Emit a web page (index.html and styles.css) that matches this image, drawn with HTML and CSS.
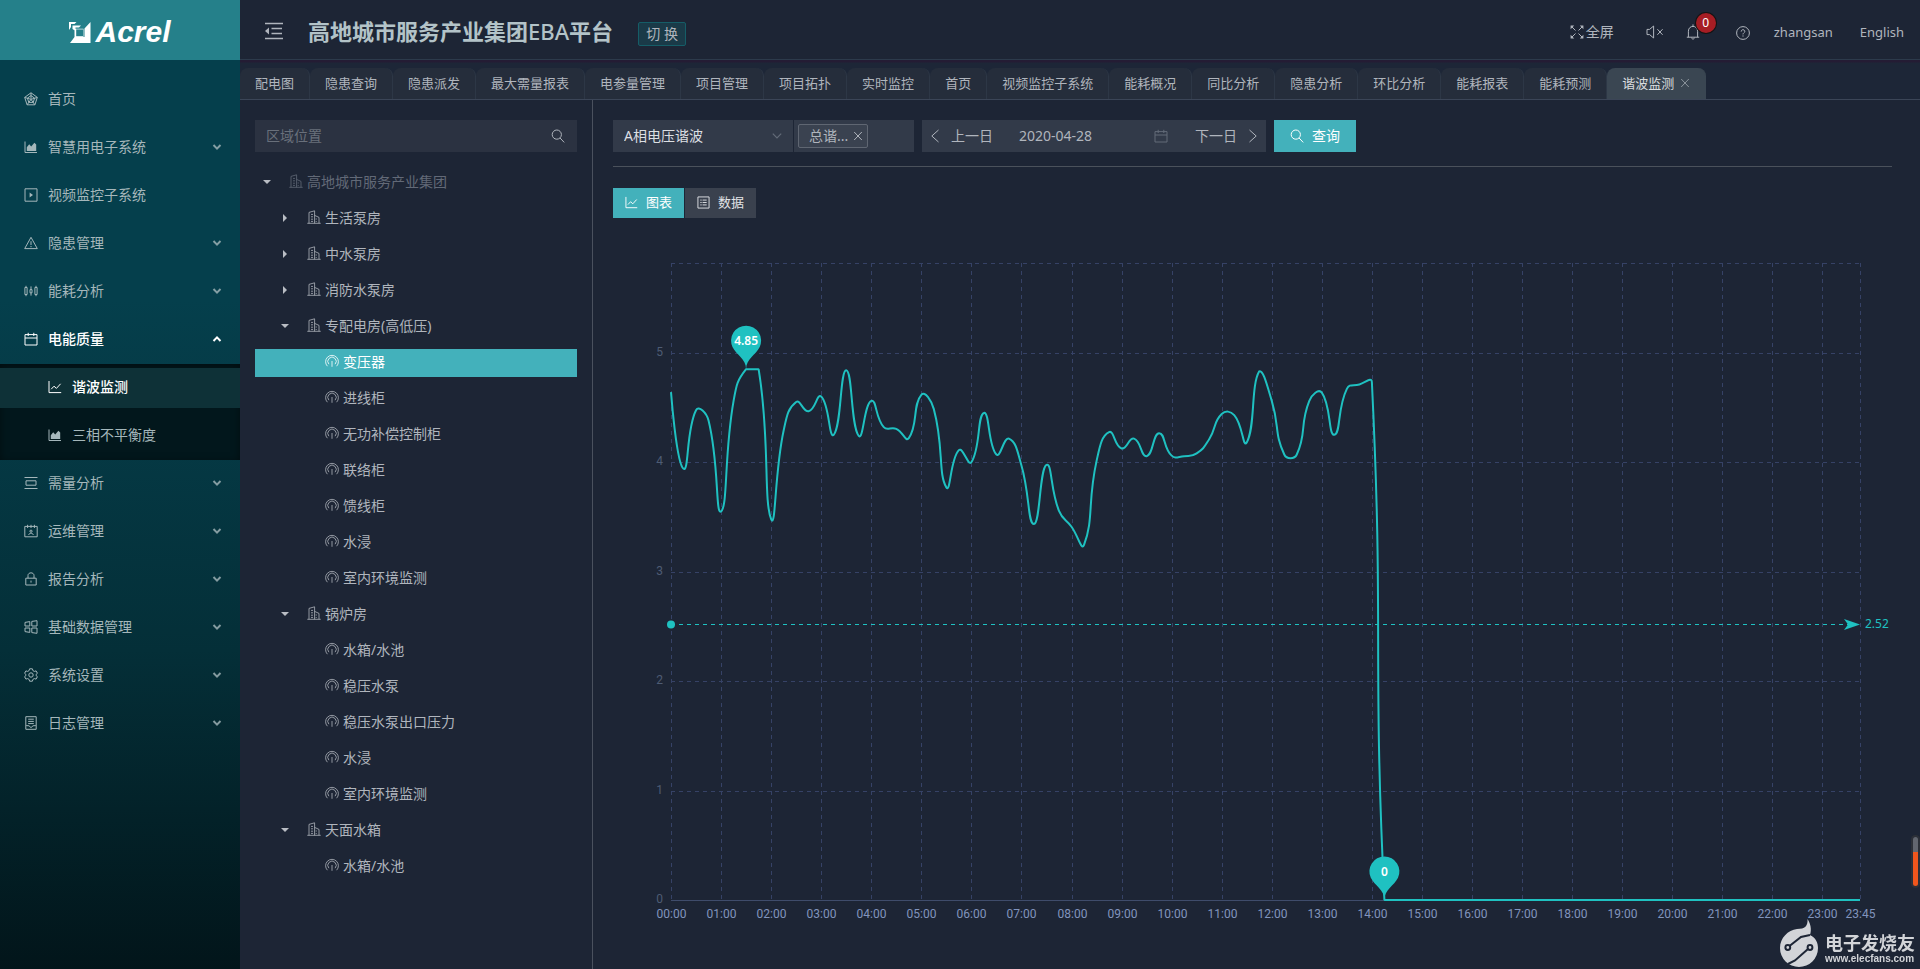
FILE: index.html
```html
<!DOCTYPE html>
<html lang="zh-CN">
<head>
<meta charset="utf-8">
<title>谐波监测 - 高地城市服务产业集团EBA平台</title>
<link rel="stylesheet" href="styles.css">
</head>
<body>
<svg class="sprite" aria-hidden="true">
  <symbol id="radar" viewBox="0 0 14 14"><path d="M7 .8 13.3 5.4 10.9 12.8H3.1L.7 5.4ZM7 3.6 10.6 6.2 9.2 10.4H4.8L3.4 6.2ZM7 .8V7M13.3 5.4 7 7.4M10.9 12.8 7 7.4M3.1 12.8 7 7.4M.7 5.4 7 7.4"/></symbol>
  <symbol id="area" viewBox="0 0 14 14"><path d="M1 1.5V12.5H13"/><path class="fill" d="M2.8 11V7.2L5.2 4.2 7.2 6.4 10.4 2.8 12.2 4.4V11Z"/></symbol>
  <symbol id="play" viewBox="0 0 14 14"><path d="M1 .8H13V13.2H1Z"/><path class="fill" d="M5.6 4.4V9.6L9 7Z"/></symbol>
  <symbol id="warn" viewBox="0 0 14 14"><path d="M7 1.3 13.3 12.6H.7ZM7 5.2V9M7 10V11.2"/></symbol>
  <symbol id="stock" viewBox="0 0 14 14"><path d="M.9 3.5H3.1V10.5H.9ZM2 1.8V3.5M2 10.5V12.2M6 5.6H8V8.8H6ZM7 2.4V5.6M7 8.8V11.6M10.9 3.5H13.1V10.5H10.9ZM12 1.8V3.5M12 10.5V12.2"/></symbol>
  <symbol id="calendar" viewBox="0 0 14 14"><path d="M1 2.6H13V13H1ZM1 6H13M4.2 .8V4M9.8 .8V4"/></symbol>
  <symbol id="linechart" viewBox="0 0 14 14"><path d="M1 1V12.6H13.2M3.2 9.2 6 6.2 8.4 8.4 12.6 3.8"/></symbol>
  <symbol id="middle" viewBox="0 0 14 14"><path d="M.5 1.5H13.5M.5 12.5H13.5M2 4.8H12V9.2H2Z"/></symbol>
  <symbol id="schedule" viewBox="0 0 14 14"><path d="M.8 2.4H13.2V12.8H.8ZM3.6 .8V4M7 .8V4M10.4 .8V4M4.8 11C4.8 8.6 9.2 8.6 9.2 11M5.9 7.2A1.1 1.1 0 1 1 8.1 7.2 1.1 1.1 0 1 1 5.9 7.2"/></symbol>
  <symbol id="lock" viewBox="0 0 14 14"><path d="M1.8 6.2H12.2V13H1.8ZM4 6.2V3.4C4 0 10 0 10 3.4V6.2M7 8.6V10.6"/></symbol>
  <symbol id="windows" viewBox="0 0 14 14"><path d="M1 2.4 5.8 1.6V6H1ZM7.8 1.4 13 .7V6H7.8ZM1 8H5.8V12.4L1 11.6ZM7.8 8H13V13.3L7.8 12.6Z"/></symbol>
  <symbol id="gear" viewBox="0 0 14 14"><path d="M5.6 .8H8.4L8.9 2.6 10.3 3.4 12.1 2.9 13.4 5.3 12.1 6.4V7.6L13.4 8.7 12.1 11.1 10.3 10.6 8.9 11.4 8.4 13.2H5.6L5.1 11.4 3.7 10.6 1.9 11.1.6 8.7 1.9 7.6V6.4L.6 5.3 1.9 2.9 3.7 3.4 5.1 2.6Z"/><circle cx="7" cy="7" r="2.2"/></symbol>
  <symbol id="log" viewBox="0 0 14 14"><path d="M1.8 .7H12.2V13.3H1.8ZM4.2 3.2H9.8M4.2 5.4H9.8M4.2 7.6H9.8M2.2 9.6 5 9.8 7 11.6 9 9.8 11.8 9.6"/></symbol>
  <symbol id="down" viewBox="0 0 10 10"><path d="M1.5 3 5 6.6 8.5 3"/></symbol>
  <symbol id="up" viewBox="0 0 10 10"><path d="M1.5 7 5 3.4 8.5 7"/></symbol>
  <symbol id="building" viewBox="0 0 14 14"><path d="M.3 13.3H13.7M2 13.3V2.4L7.6 .8V13.3M7.6 5.4 12 7.4V13.3M4 4.4H6M4 6.8H6M4 9.2H6M9.2 8.4V9.6M9.2 11V12M4 11.4H6"/></symbol>
  <symbol id="meter" viewBox="0 0 14 14"><path d="M2.4 12.2A6.4 6.4 0 1 1 11.6 12.2M3.9 10.2A4.2 4.2 0 1 1 10.1 10.2M7 7V12.8"/></symbol>
  <symbol id="search" viewBox="0 0 14 14"><circle cx="5.8" cy="5.6" r="4.6"/><path d="M9.1 9 13.2 13.4"/></symbol>
  <symbol id="cross" viewBox="0 0 10 10"><path d="M1.2 1 8.8 9M8.8 1 1.2 9"/></symbol>
  <symbol id="list" viewBox="0 0 14 14"><path d="M1 1H13V13H1ZM3.6 4.4H5M6 4.4H10.4M3.6 7H5M6 7H10.4M3.6 9.6H5M6 9.6H10.4"/></symbol>
  <symbol id="left" viewBox="0 0 10 14"><path d="M8.5 1 1.8 7 8.5 13"/></symbol>
  <symbol id="right" viewBox="0 0 10 14"><path d="M1.5 1 8.2 7 1.5 13"/></symbol>
  <symbol id="fold" viewBox="0 0 18 18"><path stroke-width="1.6" d="M0 1.5H18M6.5 6.5H17M6.5 11.5H17M0 16.5H18"/><path class="fill" d="M4 5.6V12.4L0 9Z"/></symbol>
  <symbol id="shrink" viewBox="0 0 14 14"><path d="M1.5 1.5 5.5 5.5M12.5 1.5 8.5 5.5M1.5 12.5 5.5 8.5M12.5 12.5 8.5 8.5"/><path class="fill" d="M.6 .6H4.2L.6 4.2ZM13.4 .6V4.2L9.8 .6ZM.6 13.4V9.8L4.2 13.4ZM13.4 13.4H9.8L13.4 9.8Z"/></symbol>
  <symbol id="mute" viewBox="0 0 18 14"><path d="M1 4.4H3.6L7.6 1V13L3.6 9.6H1ZM11.4 4.2 16.6 9.8M16.6 4.2 11.4 9.8"/></symbol>
  <symbol id="bell" viewBox="0 0 14 16"><path d="M.8 13.2H13.2M2.4 13.2V7.2C2.4 .8 11.6 .8 11.6 7.2V13.2M7 .4V2.2M5.6 13.6C5.8 15.6 8.2 15.6 8.4 13.6"/></symbol>
  <symbol id="help" viewBox="0 0 14 14"><circle cx="7" cy="7" r="6.4"/><path d="M5.2 5.6C5.2 3 8.8 3.2 8.8 5.4 8.8 6.8 7 6.8 7 8.4M7 9.4V10.6"/></symbol>
</svg>

<div class="app">
  <aside class="sidebar">
    <a class="logo" href="#">
      <svg class="logo-mark" viewBox="0 0 22 21" aria-hidden="true"><path class="white" d="M0 0H7.5L5.5 2H2V5L0 8ZM3.5 3.5H12L10 5.5H6.5V9L3.5 7ZM21.5 0V21H1L5.5 15V6.8H14.5V15H7.5 15.5V6.5Z"/><path class="hole" d="M7.2 7.4H14.2V14.2H7.2Z"/></svg>
      <span>Acrel</span>
    </a>
    <nav class="menu">
      <a class="item" href="#"><svg class="ico"><use href="#radar"/></svg><span>首页</span></a>
      <a class="item" href="#"><svg class="ico"><use href="#area"/></svg><span>智慧用电子系统</span><svg class="caret"><use href="#down"/></svg></a>
      <a class="item" href="#"><svg class="ico"><use href="#play"/></svg><span>视频监控子系统</span></a>
      <a class="item" href="#"><svg class="ico"><use href="#warn"/></svg><span>隐患管理</span><svg class="caret"><use href="#down"/></svg></a>
      <a class="item" href="#"><svg class="ico"><use href="#stock"/></svg><span>能耗分析</span><svg class="caret"><use href="#down"/></svg></a>
      <a class="item open" href="#"><svg class="ico"><use href="#calendar"/></svg><span>电能质量</span><svg class="caret"><use href="#up"/></svg></a>
      <div class="submenu">
        <a class="item current" href="#"><svg class="ico"><use href="#linechart"/></svg><span>谐波监测</span></a>
        <a class="item" href="#"><svg class="ico"><use href="#area"/></svg><span>三相不平衡度</span></a>
      </div>
      <a class="item" href="#"><svg class="ico"><use href="#middle"/></svg><span>需量分析</span><svg class="caret"><use href="#down"/></svg></a>
      <a class="item" href="#"><svg class="ico"><use href="#schedule"/></svg><span>运维管理</span><svg class="caret"><use href="#down"/></svg></a>
      <a class="item" href="#"><svg class="ico"><use href="#lock"/></svg><span>报告分析</span><svg class="caret"><use href="#down"/></svg></a>
      <a class="item" href="#"><svg class="ico"><use href="#windows"/></svg><span>基础数据管理</span><svg class="caret"><use href="#down"/></svg></a>
      <a class="item" href="#"><svg class="ico"><use href="#gear"/></svg><span>系统设置</span><svg class="caret"><use href="#down"/></svg></a>
      <a class="item" href="#"><svg class="ico"><use href="#log"/></svg><span>日志管理</span><svg class="caret"><use href="#down"/></svg></a>
    </nav>
  </aside>

  <div class="main">
    <header class="header">
      <button class="plain fold" aria-label="收起菜单"><svg><use href="#fold"/></svg></button>
      <h1>高地城市服务产业集团<span>EBA</span>平台</h1>
      <button class="switch">切 换</button>
      <div class="tools">
        <button class="plain full"><svg class="ico"><use href="#shrink"/></svg>全屏</button>
        <button class="plain mute" aria-label="静音"><svg><use href="#mute"/></svg></button>
        <button class="plain bell" aria-label="通知"><svg><use href="#bell"/></svg><span class="badge">0</span></button>
        <button class="plain help" aria-label="帮助"><svg class="ico"><use href="#help"/></svg></button>
        <a class="user" href="#">zhangsan</a>
        <a class="lang" href="#">English</a>
      </div>
    </header>

    <nav class="tabs">
      <a href="#">配电图</a><a href="#">隐患查询</a><a href="#">隐患派发</a><a href="#">最大需量报表</a><a href="#">电参量管理</a><a href="#">项目管理</a><a href="#">项目拓扑</a><a href="#">实时监控</a><a href="#">首页</a><a href="#">视频监控子系统</a><a href="#">能耗概况</a><a href="#">同比分析</a><a href="#">隐患分析</a><a href="#">环比分析</a><a href="#">能耗报表</a><a href="#">能耗预测</a><a class="active" href="#">谐波监测<svg class="x"><use href="#cross"/></svg></a>
    </nav>

    <div class="body">
      <section class="tree-panel">
        <div class="search">
          <input type="text" placeholder="区域位置" aria-label="区域位置">
          <button class="plain" aria-label="搜索"><svg class="ico"><use href="#search"/></svg></button>
        </div>
        <ul class="tree">
          <li class="l0 dim"><i class="arrow down"></i><svg class="ico"><use href="#building"/></svg><a href="#">高地城市服务产业集团</a></li>
          <li class="l1"><i class="arrow"></i><svg class="ico"><use href="#building"/></svg><a href="#">生活泵房</a></li>
          <li class="l1"><i class="arrow"></i><svg class="ico"><use href="#building"/></svg><a href="#">中水泵房</a></li>
          <li class="l1"><i class="arrow"></i><svg class="ico"><use href="#building"/></svg><a href="#">消防水泵房</a></li>
          <li class="l1"><i class="arrow down"></i><svg class="ico"><use href="#building"/></svg><a href="#">专配电房(高低压)</a></li>
          <li class="l2 selected"><svg class="ico"><use href="#meter"/></svg><a href="#">变压器</a></li>
          <li class="l2"><svg class="ico"><use href="#meter"/></svg><a href="#">进线柜</a></li>
          <li class="l2"><svg class="ico"><use href="#meter"/></svg><a href="#">无功补偿控制柜</a></li>
          <li class="l2"><svg class="ico"><use href="#meter"/></svg><a href="#">联络柜</a></li>
          <li class="l2"><svg class="ico"><use href="#meter"/></svg><a href="#">馈线柜</a></li>
          <li class="l2"><svg class="ico"><use href="#meter"/></svg><a href="#">水浸</a></li>
          <li class="l2"><svg class="ico"><use href="#meter"/></svg><a href="#">室内环境监测</a></li>
          <li class="l1"><i class="arrow down"></i><svg class="ico"><use href="#building"/></svg><a href="#">锅炉房</a></li>
          <li class="l2"><svg class="ico"><use href="#meter"/></svg><a href="#">水箱/水池</a></li>
          <li class="l2"><svg class="ico"><use href="#meter"/></svg><a href="#">稳压水泵</a></li>
          <li class="l2"><svg class="ico"><use href="#meter"/></svg><a href="#">稳压水泵出口压力</a></li>
          <li class="l2"><svg class="ico"><use href="#meter"/></svg><a href="#">水浸</a></li>
          <li class="l2"><svg class="ico"><use href="#meter"/></svg><a href="#">室内环境监测</a></li>
          <li class="l1"><i class="arrow down"></i><svg class="ico"><use href="#building"/></svg><a href="#">天面水箱</a></li>
          <li class="l2"><svg class="ico"><use href="#meter"/></svg><a href="#">水箱/水池</a></li>
        </ul>
      </section>

      <section class="content">
        <div class="toolbar">
          <div class="select">
            <select aria-label="参数"><option>A相电压谐波</option></select>
            <svg><use href="#down"/></svg>
          </div>
          <div class="multi"><span class="tag">总谐...<button class="plain" aria-label="移除"><svg class="x"><use href="#cross"/></svg></button></span></div>
          <div class="date">
            <button class="plain"><svg><use href="#left"/></svg>上一日</button>
            <input type="text" value="2020-04-28" aria-label="日期">
            <svg class="ico cal"><use href="#calendar"/></svg>
            <button class="plain">下一日<svg><use href="#right"/></svg></button>
          </div>
          <button class="query"><svg class="ico"><use href="#search"/></svg>查询</button>
        </div>
        <div class="views">
          <button class="on"><svg><use href="#linechart"/></svg>图表</button>
          <button><svg><use href="#list"/></svg>数据</button>
        </div>
        <svg class="chart" id="chart" role="img" aria-label="A相电压总谐波曲线"></svg>
      </section>
    </div>
  </div>
</div>

<div class="meter-bar"></div>
<div class="watermark">
  <svg viewBox="0 0 40 50" aria-hidden="true">
    <path class="shape" d="M28.5 1C33 8 32 14 31 17 37 20 39 25 39 30A19 19 0 0 1 20 49 19 19 0 0 1 1 30C1 20 9 12 18 11 26 11 29 8 28.5 1Z"/>
    <path class="trace" d="M10.5 28 22 19 31 17M29 31 16 42.5 9 46"/><circle class="node" cx="8.8" cy="29.5" r="2.4"/><circle class="node" cx="31" cy="29.5" r="2.4"/>
  </svg>
  <p><b>电子发烧友</b><small>www.elecfans.com</small></p>
</div>
<script src="chart.js"></script>
</body>
</html>
```
FILE: styles.css
```css
* { box-sizing: border-box; }

body {
  margin: 0;
  background: #1d2535;
  color: #b0b5bd;
  font: 14px/20px "Noto Sans", "Noto Sans CJK SC", sans-serif;
}

a { color: inherit; text-decoration: none; }
button, input, select { font: inherit; color: inherit; border: 0; margin: 0; }
button { cursor: pointer; }
h1, ul, p { margin: 0; padding: 0; }

svg { fill: none; stroke: currentColor; flex: none; }
.fill { fill: currentColor; stroke: none; }
.sprite { position: absolute; width: 0; height: 0; }
.ico { width: 14px; height: 14px; }
.x { width: 10px; height: 10px; }
.plain { display: flex; align-items: center; padding: 0; background: none; }

.app { display: flex; min-height: 100vh; }

/* sidebar */
.sidebar {
  flex: none;
  width: 240px;
  background: linear-gradient(#053f4c 0, #053f4c 300px, #042f38 650px, #02151a 100%);
  color: #a5b7bb;
}
.logo {
  display: flex;
  align-items: center;
  justify-content: center;
  gap: 4px;
  height: 60px;
  padding-top: 4px;
  background: #25808a;
  color: #fff;
  font: italic bold 30px/30px "Liberation Sans", sans-serif;
}
.logo-mark { width: 22px; height: 21px; stroke: none; }
.white { fill: #fff; }
.hole { fill: #25808a; }
.menu { padding: 16px 0; }
.item {
  display: flex;
  align-items: center;
  height: 40px;
  margin: 8px 0;
  padding: 0 18px 2px 24px;
}
.item:first-child { margin-top: 4px; }
.item .ico { margin-right: 10px; }
.caret { width: 10px; height: 10px; margin-left: auto; stroke-width: 2; opacity: .8; }
.open { color: #fff; font-weight: 500; margin-bottom: 4px; }
.open .caret { opacity: 1; }
.submenu {
  display: flow-root;
  background: #02171c;
  box-shadow: inset 0 2px 8px rgba(0, 0, 0, .45);
}
.submenu .item { padding-left: 48px; }
.submenu .item + .item { margin: 8px 0 4px; }
.submenu .current { margin: 4px 0 0; background: #0e3137; color: #fff; font-weight: 500; }
.submenu + .item { margin-top: 4px; }

/* header */
.main { display: flex; flex: 1; flex-direction: column; min-width: 0; }
.header {
  display: flex;
  align-items: center;
  height: 60px;
  padding: 4px 16px 0 25px;
  border-bottom: 1px solid #2c3a4b;
}
.fold { margin-bottom: 2px; }
.fold svg { width: 18px; height: 18px; }
h1 {
  margin: 0 25px 2px;
  color: #b3c3c8;
  font-size: 22px;
  line-height: 32px;
  white-space: nowrap;
}
h1 span { font-weight: 500; }
.switch {
  width: 48px;
  height: 24px;
  margin-top: 5px;
  padding: 0;
  border: 1px solid #155d67;
  border-radius: 2px;
  background: #1a3a48;
  line-height: 20px;
  white-space: nowrap;
}
.tools { display: flex; align-items: center; margin-left: auto; }
.full { gap: 2px; margin-right: 32px; }
.mute svg { width: 18px; height: 14px; }
.mute { margin-right: 22px; }
.bell { position: relative; margin-right: 36px; }
.bell svg { width: 14px; height: 16px; }
.badge {
  position: absolute;
  left: 10px;
  top: -11px;
  width: 20px;
  height: 20px;
  border-radius: 10px;
  background: #a61d24;
  color: #fff;
  font-size: 12px;
  line-height: 20px;
  box-shadow: 0 0 0 1px #141414;
}
.help { margin-right: 24px; padding-top: 3px; }
.user, .lang { font-size: 13px; }
.user { margin-right: 27px; }

/* page tabs */
.tabs {
  display: flex;
  padding-top: 8px;
  border-bottom: 1px solid #3b4557;
  background: linear-gradient(#241c34 0, #241c34 2px, #1d2637 3px);
}
.tabs a {
  display: flex;
  align-items: center;
  height: 31px;
  padding: 0 15px 1px;
  border-right: 1px solid #2d3746;
  border-radius: 8px 8px 0 0;
  background: #252d3b;
  font-size: 13px;
  white-space: nowrap;
}
.tabs .active { background: #3a4652; color: #d9dcdf; border-color: #3a4652; }
.tabs .x { margin-left: 6px; color: #8b949c; }

.body { display: flex; flex: 1; }

/* location tree */
.tree-panel {
  flex: none;
  width: 353px;
  padding: 20px 15px;
  border-right: 1px solid #4a515e;
}
.search {
  display: flex;
  height: 32px;
  padding: 0 12px 0 11px;
  background: #2b3241;
}
.search input { flex: 1; min-width: 0; padding: 0; background: none; outline: 0; }
::placeholder { color: #69707b; opacity: 1; }
.tree { padding-top: 13px; list-style: none; }
.tree li {
  display: flex;
  align-items: center;
  height: 28px;
  margin: 4px 0 8px;
  padding-bottom: 2px;
}
.tree .ico { margin: 0 4px 2px 0; stroke-width: .8; }
.tree .l0 { padding-left: 8px; }
.tree .l1 { padding-left: 26px; }
.tree .l2 { padding-left: 70px; }
.tree .dim a, .tree .dim .ico { color: #626977; }
.tree .selected { background: #43b1bb; color: #fff; }
.arrow { display: grid; place-items: center; width: 8px; height: 8px; margin-right: 18px; }
.arrow::before {
  content: "";
  width: 4px;
  height: 8px;
  background: #b9bdc4;
  clip-path: polygon(0 0, 100% 50%, 0 100%);
}
.arrow.down::before { width: 8px; height: 4px; clip-path: polygon(0 0, 100% 0, 50% 100%); }

/* content */
.content {
  display: flex;
  flex: 1;
  flex-direction: column;
  min-width: 0;
  padding: 20px 28px 0 20px;
}
.toolbar {
  display: flex;
  padding-bottom: 14px;
  border-bottom: 1px solid #4a515b;
}
.select { display: flex; align-items: center; width: 180px; height: 32px; background: #323a49; color: #dcdfe3; }
.select select { appearance: none; flex: 1; height: 32px; padding: 0 11px; background: none; outline: 0; }
.select svg { width: 12px; height: 12px; margin-right: 10px; color: #636b78; }
.multi { display: flex; align-items: center; width: 120px; height: 32px; margin: 0 8px 0 1px; padding-left: 4px; background: #323a49; }
.tag { display: flex; align-items: center; gap: 5px; height: 24px; padding: 0 4px 0 10px; border: 1px solid #5f6672; border-radius: 2px; background: #3a4250; white-space: nowrap; }
.date { display: flex; align-items: center; width: 344px; height: 32px; margin-right: 8px; padding: 0 8px; background: #323a49; }
.date .plain { gap: 11px; white-space: nowrap; }
.date .plain svg { width: 10px; height: 14px; }
.date input { flex: 1; min-width: 0; margin-left: 26px; padding: 0; background: none; outline: 0; }
.date .cal { margin-right: 27px; color: #636b78; }
.query, .views button { display: flex; align-items: center; justify-content: center; gap: 8px; padding: 0; white-space: nowrap; }
.query { width: 82px; height: 32px; background: #43b1bb; color: #fff; }
.views { display: flex; gap: 1px; padding-top: 21px; }
.views button { width: 71px; height: 30px; padding-bottom: 2px; background: #3a414e; color: #e2e4e7; font-size: 13px; }
.views svg { width: 13px; height: 13px; }
.views .on { background: #43b1bb; color: #fff; }

/* chart */
.chart { flex: 1; width: 100%; min-height: 400px; font-size: 12px; overflow: visible; }
.chart text { stroke: none; dominant-baseline: central; text-anchor: middle; }
.grid { stroke: #364266; stroke-dasharray: 4 4; shape-rendering: crispEdges; }
.axis { stroke: #3f4c6b; shape-rendering: crispEdges; }
.series { stroke: #1fc1c1; stroke-width: 2; stroke-linejoin: bevel; }
.average { stroke: #1fc1c1; stroke-dasharray: 4 4; shape-rendering: crispEdges; }
.mark { fill: #1fc1c1; stroke: none; }
.x-label, .y-label { font-family: Roboto, sans-serif; }
.chart .x-label { fill: #8194bd; }
.chart .y-label { fill: #4e5c74; text-anchor: end; }
.chart .avg-label { fill: #1fc1c1; text-anchor: start; }
.chart .pin-label { fill: #fff; font-weight: 600; }

/* overlays in the page corner */
.meter-bar {
  position: fixed;
  right: 2px;
  bottom: 83px;
  width: 5px;
  height: 49px;
  border-radius: 3px;
  background: linear-gradient(#62666f 15px, #f0561d 15px);
  box-shadow: 0 0 0 2px #2c3038;
}
.watermark {
  position: fixed;
  right: 5px;
  bottom: 1px;
  display: flex;
  align-items: flex-end;
  gap: 6px;
  color: #d2d4d8;
}
.watermark svg { width: 40px; height: 50px; stroke: none; }
.watermark p { display: flex; flex-direction: column; padding-bottom: 3px; }
.watermark b { font-size: 18px; line-height: 20px; }
.watermark small { font: bold 10px/12px "Liberation Sans", sans-serif; }
.shape { fill: #d2d4d8; }
.trace { stroke: #1d2535; stroke-width: 2; }
.node { fill: #d2d4d8; stroke: #1d2535; stroke-width: 2; }
```
FILE: chart.js
```js
const values = [
  4.64, 3.94, 4.475, 4.38, 3.55, 4.56, 4.85, 4.85, 3.48, 4.29, 4.55, 4.465,
  4.60, 4.25, 4.84, 4.24, 4.56, 4.32, 4.305, 4.22, 4.615, 4.485, 3.77, 4.11,
  4.00, 4.45, 4.07, 4.215, 3.97, 3.435, 3.975, 3.555, 3.41, 3.245, 4.01, 4.275,
  4.125, 4.215, 4.055, 4.265, 4.06, 4.055, 4.08, 4.21, 4.44, 4.43, 4.18, 4.83,
  4.56, 4.07, 4.07, 4.56, 4.635, 4.25, 4.67, 4.71, 4.73
];
while (values.length < 96) values.push(0);

const chart = document.getElementById('chart');
const axisMax = 5.82;
const average = 2.52;

// Smooth bezier path, control points clamped to the bounds of the series.
function smoothPath(pts) {
  const ys = pts.map(p => p[1]);
  const lo = Math.min(...ys), hi = Math.max(...ys);
  const clamp = y => Math.max(lo, Math.min(hi, y));
  let d = `M${pts[0][0]} ${pts[0][1]}`;
  let c0 = pts[0];
  for (let i = 1; i < pts.length; i++) {
    const p = pts[i], a = pts[i - 1], b = pts[i + 1] || p;
    const vx = b[0] - a[0], vy = b[1] - a[1];
    const lp = Math.hypot(p[0] - a[0], p[1] - a[1]);
    const ln = Math.hypot(b[0] - p[0], b[1] - p[1]);
    const r = ln / (ln + lp);
    const c1 = [p[0] - vx * 0.5 * (1 - r), clamp(p[1] - vy * 0.5 * (1 - r))];
    d += `C${c0[0]} ${c0[1]} ${c1[0]} ${c1[1]} ${p[0]} ${p[1]}`;
    c0 = [p[0] + vx * 0.5 * r, clamp(p[1] + vy * 0.5 * r)];
  }
  return d;
}

function pin(x, y, label) {
  const cy = y - 28.6, dx = 13.6, dy = 6.4;
  return `<path class="mark" d="M${x - dx} ${cy + dy}A15 15 0 1 1 ${x + dx} ${cy + dy}` +
    `C${x + dx - 3.9} ${cy + dy + 8.1} ${x} ${y - 10.5} ${x} ${y}` +
    `C${x} ${y - 10.5} ${x - dx + 3.9} ${cy + dy + 8.1} ${x - dx} ${cy + dy}Z"/>` +
    `<text class="pin-label" x="${x}" y="${cy}">${label}</text>`;
}

function draw() {
  const box = chart.getBoundingClientRect();
  const left = 58, right = box.width - 32, top = 45, bottom = box.height - 69;
  const px = i => left + (right - left) * i / 95;
  const py = v => bottom - (bottom - top) * v / axisMax;
  let out = '';
  for (let i = 0; i <= 96; i += 4) {
    const k = Math.min(i, 95), x = Math.round(px(k)) + 0.5;
    const time = k === 95 ? '23:45' : String(k / 4).padStart(2, '0') + ':00';
    out += `<path class="grid" d="M${x} ${top}V${bottom}"/>`;
    out += `<text class="x-label" x="${x}" y="${bottom + 14}">${time}</text>`;
  }
  for (let v = 0; v <= 5; v++) {
    const y = Math.round(py(v)) + 0.5;
    out += `<path class="${v ? 'grid' : 'axis'}" d="M${left} ${y}H${right}"/>`;
    out += `<text class="y-label" x="${left - 8}" y="${y - 2}">${v}</text>`;
  }
  out += `<path class="grid" d="M${left} ${top + 0.5}H${right}"/>`;
  const pts = values.map((v, i) => [px(i), py(v)]);
  out += `<path class="series" d="${smoothPath(pts)}"/>`;
  const ay = Math.round(py(average)) + 0.5;
  out += `<path class="average" d="M${left} ${ay}H${right - 12}"/>`;
  out += `<circle class="mark" cx="${left}" cy="${ay}" r="4"/>`;
  out += `<path class="mark" d="M${right} ${ay}L${right - 16} ${ay - 5.5} ${right - 12} ${ay} ${right - 16} ${ay + 5.5}Z"/>`;
  out += `<text class="avg-label" x="${right + 5}" y="${ay - 1}">2.52</text>`;
  out += pin(px(6), py(4.85), '4.85') + pin(px(57), py(0), '0');
  chart.innerHTML = out;
}

draw();
window.addEventListener('resize', draw);
```
